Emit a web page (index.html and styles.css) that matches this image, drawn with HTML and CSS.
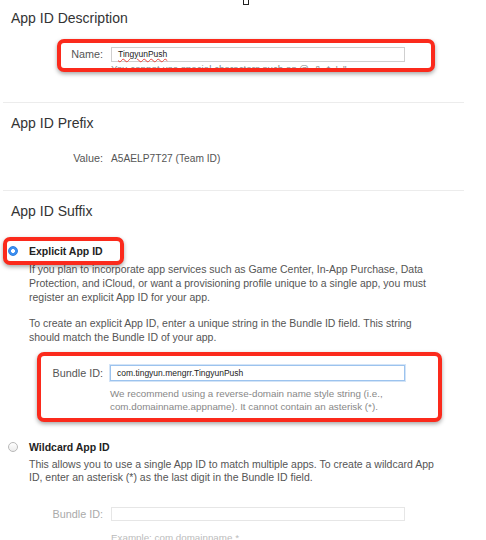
FILE: index.html
```html
<!DOCTYPE html>
<html lang="en">

<head>
    <meta charset="UTF-8">
    <meta name="viewport" content="width=device-width, initial-scale=1.0">
    <title>Register App ID</title>
    <link rel="stylesheet" href="styles.css">
</head>

<body>
    <div class="page">
        <span class="marker"></span>

        <section class="block block-desc">
            <h2>App ID Description</h2>
            <div class="callout callout-name">
                <div class="field">
                    <span class="field-label">Name:</span>
                    <div class="field-body">
                        <div class="input"><span class="misspelled">TingyunPush</span></div>
                        <p class="hint">You cannot use special characters such as @, &amp;, *, ', "</p>
                    </div>
                </div>
            </div>
        </section>

        <section class="block block-prefix">
            <h2>App ID Prefix</h2>
            <div class="field field-value">
                <span class="field-label">Value:</span>
                <span class="value">A5AELP7T27 (Team ID)</span>
            </div>
        </section>

        <section class="block block-suffix">
            <h2>App ID Suffix</h2>

            <div class="callout callout-radio">
                <span class="radio radio-on"></span>
                <span class="option-title">Explicit App ID</span>
            </div>
            <p class="option-text option-text-first">If you plan to incorporate app services such as Game Center, In-App Purchase, Data Protection, and iCloud, or want a provisioning profile unique to a single app, you must register an explicit App ID for your app.</p>
            <p class="option-text option-text-next">To create an explicit App ID, enter a unique string in the Bundle ID field. This string should match the Bundle ID of your app.</p>

            <div class="callout callout-bundle">
                <div class="field">
                    <span class="field-label">Bundle ID:</span>
                    <div class="field-body">
                        <div class="input input-focus">com.tingyun.mengrr.TingyunPush</div>
                        <p class="hint hint-bundle">We recommend using a reverse-domain name style string (i.e.,<br>com.domainname.appname). It cannot contain an asterisk (*).</p>
                    </div>
                </div>
            </div>

            <div class="option-row">
                <span class="radio"></span>
                <span class="option-title">Wildcard App ID</span>
            </div>
            <p class="option-text option-text-wild">This allows you to use a single App ID to match multiple apps. To create a wildcard App ID, enter an asterisk (*) as the last digit in the Bundle ID field.</p>

            <div class="field field-disabled">
                <span class="field-label">Bundle ID:</span>
                <div class="field-body">
                    <div class="input"></div>
                    <p class="hint hint-example">Example: com.domainname.*</p>
                </div>
            </div>
        </section>
    </div>
</body>

</html>
```

FILE: styles.css
```css
/* Apple developer portal - App ID form */
body {
    margin: 0;
    background: #ffffff;
    color: #555555;
    font-family: "Liberation Sans", Arial, sans-serif;
}

.page {
    position: relative;
    height: 540px;
    overflow: hidden;
}

.marker {
    position: absolute;
    left: 243px;
    top: -1px;
    width: 4px;
    height: 4px;
    border: 1px solid #222222;
    background: #ffffff;
}

.block {
    margin-left: 3px;
    width: 461px;
    padding-left: 8px;
    box-sizing: border-box;
    border-bottom: 1px solid #ececec;
}

.block:last-child {
    border-bottom: 0;
}

h2 {
    margin: 11px 0 0;
    font-size: 14px;
    line-height: 18px;
    font-weight: normal;
    color: #333333;
}

.block-desc {
    padding-bottom: 30px;
}

.block-desc h2 {
    margin-top: 9px;
}

.block-prefix {
    padding-bottom: 24.5px;
}

/* red annotation boxes */
.callout {
    position: relative;
    z-index: 1;
    box-sizing: border-box;
    border: 4px solid #fb2a1c;
    border-radius: 7px;
    background: #ffffff;
    box-shadow: 0 2px 4px rgba(0, 0, 0, 0.35);
}

.callout-name {
    margin: 12px 0 0 46px;
    width: 378px;
    height: 33px;
    padding-top: 4px;
    overflow: hidden;
}

.callout-name .hint {
    margin-top: 0;
}

.callout-radio {
    display: flex;
    align-items: center;
    margin: 17px 0 0 -8px;
    width: 121px;
    height: 28px;
    padding-left: 1px;
}

.callout-bundle {
    margin: 8.3px 0 0 26px;
    width: 405px;
    height: 70px;
    padding-top: 9px;
    overflow: hidden;
}

/* label / control rows */
.field {
    display: grid;
    grid-template-columns: 92px 294px;
    column-gap: 8px;
    align-items: start;
}

.callout-name .field {
    grid-template-columns: 42px 294px;
}

.callout-bundle .field {
    grid-template-columns: 62px 295px;
    column-gap: 7px;
}

.field-label {
    text-align: right;
    font-size: 10.8px;
    line-height: 15px;
    color: #555555;
}

.callout-bundle .field-label {
    line-height: 16px;
}

.field-value {
    margin-top: 18.5px;
}

.value {
    font-size: 10.2px;
    line-height: 15px;
    color: #555555;
}

.input {
    height: 15px;
    box-sizing: border-box;
    padding: 0 6px;
    border: 1px solid #cfcfcf;
    font-size: 8.5px;
    line-height: 13px;
    color: #222222;
    background: #ffffff;
}

.misspelled {
    text-decoration: underline wavy #e8453c;
    text-decoration-thickness: 1px;
}

.input-focus {
    height: 16px;
    line-height: 14px;
    border-color: #9cc3ee;
    box-shadow: 0 0 0 1px #d3e4f7;
}

.hint {
    margin: 1.5px 0 0;
    font-size: 9.8px;
    line-height: 13px;
    color: #888888;
    white-space: nowrap;
}

.hint-bundle {
    margin-top: 5.5px;
}

/* radio options */
.radio {
    flex: none;
    width: 10px;
    height: 10px;
    margin-right: 11px;
    box-sizing: border-box;
    border-radius: 50%;
    border: 1px solid #b9b9b9;
    background: linear-gradient(#ffffff, #ececec);
}

.radio-on {
    border-color: #2f7fe0;
    background: radial-gradient(circle, #ffffff 0 1.8px, #3b8ef0 2.2px);
}

.option-title {
    font-size: 10.5px;
    font-weight: bold;
    color: #222222;
}

.option-row {
    display: flex;
    align-items: center;
    height: 14px;
    margin: 18px 0 0 -3px;
}

.option-text {
    margin: 0 0 0 18px;
    width: 410px;
    font-size: 10.5px;
    line-height: 14px;
    color: #555555;
}

.option-text-first {
    margin-top: -3.3px;
}

.option-text-next {
    margin-top: 12px;
}

.option-text-wild {
    margin-top: 4px;
    line-height: 12.5px;
}

.field-disabled {
    margin-top: 24px;
}

.field-disabled .field-label {
    color: #aaaaaa;
    line-height: 14px;
}

.field-disabled .input {
    height: 14px;
    border-color: #e6e6e6;
}

.hint-example {
    margin-top: 9.5px;
    color: #bbbbbb;
}
```
